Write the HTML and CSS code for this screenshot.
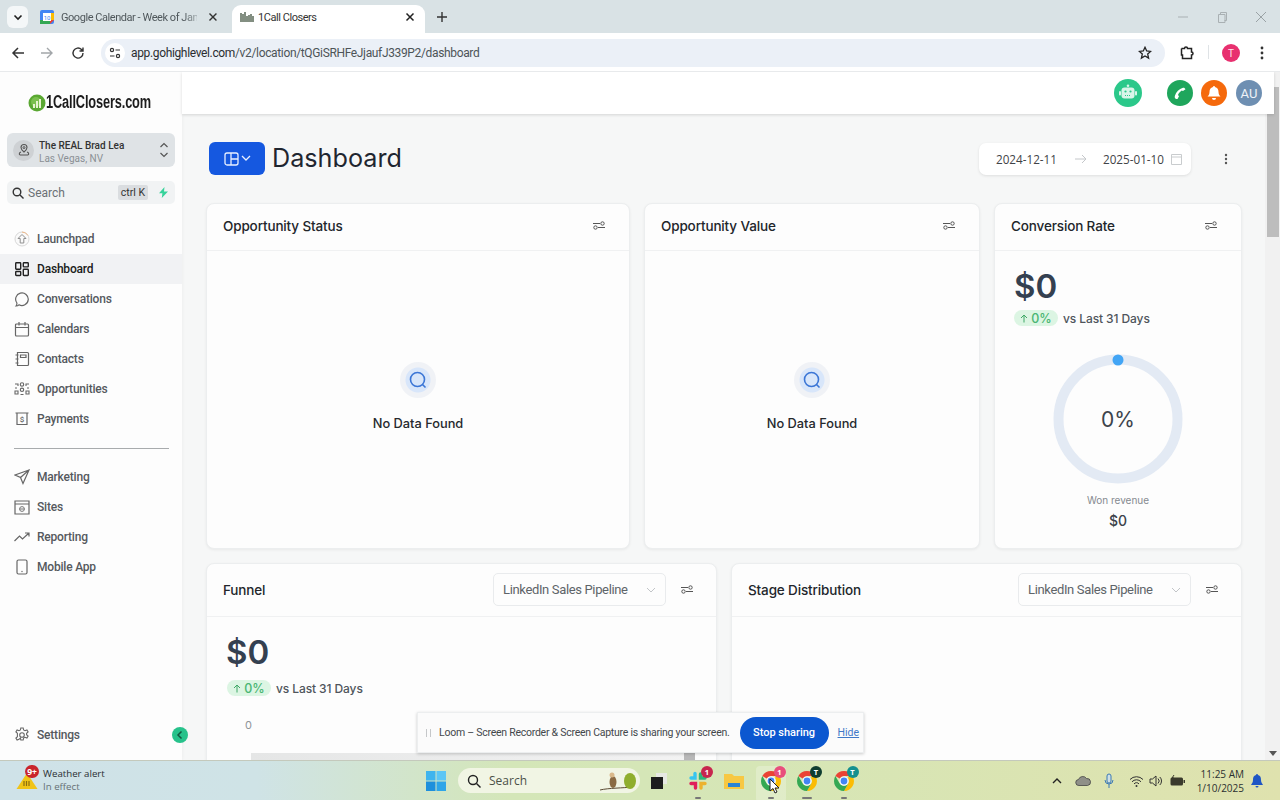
FILE: index.html
```html
<!DOCTYPE html>
<html lang="en">
<head>
<meta charset="utf-8">
<title>1Call Closers</title>
<link rel="stylesheet" href="styles.css">
</head>
<body>
<div class="tabstrip">
  <div class="tab-search"><svg width="10" height="10" viewBox="0 0 10 10"><path d="M1.500 3.500 5 7l3.500-3.500" fill="none" stroke="#1f1f1f" stroke-width="1.600"/></svg></div>
  <div class="tab tab-idle">
    <svg class="fav" width="14" height="14" viewBox="0 0 14 14"><rect width="14" height="14" rx="2" fill="#4285f4"/><rect x="0" y="10" width="10" height="4" fill="#34a853"/><path d="M10 10h4l-4 4z" fill="#ea4335"/><rect x="10" y="3" width="4" height="7" fill="#fbbc04"/><rect x="3" y="3" width="8" height="8" fill="#fff"/><text x="7" y="9.600" font-size="6" text-anchor="middle" fill="#4285f4" font-family="Roboto">10</text></svg>
    <span class="tab-title fade">Google Calendar - Week of Jan</span>
    <svg class="tab-x" width="10" height="10" viewBox="0 0 10 10"><path d="M1.500 1.500l7 7m0-7-7 7" stroke="#333" stroke-width="1.400"/></svg>
  </div>
  <div class="tab tab-active">
    <svg class="fav" width="14" height="12" viewBox="0 0 14 12"><path d="M1 2v9M3 3v8M5 1v10M7 5v6M9 4v7M11 3v8M13 5v6" stroke="#5a6a58" stroke-width="1.500"/></svg>
    <span class="tab-title">1Call Closers</span>
    <svg class="tab-x" width="10" height="10" viewBox="0 0 10 10"><path d="M1.500 1.500l7 7m0-7-7 7" stroke="#222" stroke-width="1.500"/></svg>
  </div>
  <svg class="newtab" width="12" height="12" viewBox="0 0 12 12"><path d="M6 1v10M1 6h10" stroke="#333" stroke-width="1.400"/></svg>
  <div class="winctl">
    <svg width="12" height="12" viewBox="0 0 12 12"><path d="M1 6h10" stroke="#a9b0b3"/></svg>
    <svg width="12" height="12" viewBox="0 0 12 12"><path d="M2.500 3.500h6.500v8h-6.500zM4.500 3.500V1.500h6v8h-2" fill="none" stroke="#a9b0b3"/></svg>
    <svg width="12" height="12" viewBox="0 0 12 12"><path d="M1 1l10 10m0-10L1 11" stroke="#9aa2a5"/></svg>
  </div>
</div>

<div class="toolbar">
  <svg class="tb-ic" width="14" height="14" viewBox="0 0 14 14"><path d="M13 7H2M7 2 2 7l5 5" fill="none" stroke="#333" stroke-width="1.500"/></svg>
  <svg class="tb-ic" width="14" height="14" viewBox="0 0 14 14"><path d="M1 7h11M7 2l5 5-5 5" fill="none" stroke="#a2a6a9" stroke-width="1.400"/></svg>
  <svg class="tb-ic" width="14" height="14" viewBox="0 0 14 14"><path d="M12 7a5 5 0 1 1-1.500-3.500L12 5M12 1.500V5H8.500" fill="none" stroke="#333" stroke-width="1.400"/></svg>
  <div class="omnibox">
    <span class="site-ic"><svg width="12" height="12" viewBox="0 0 12 12"><circle cx="3" cy="3" r="1.600" fill="none" stroke="#333" stroke-width="1.200"/><path d="M6.500 3H11M1 9h4.500" stroke="#333" stroke-width="1.200"/><circle cx="9" cy="9" r="1.600" fill="none" stroke="#333" stroke-width="1.200"/></svg></span>
    <span class="url">app.gohighlevel.com<span class="url-dim">/v2/location/tQGiSRHFeJjaufJ339P2/dashboard</span></span>
    <svg class="star" width="14" height="14" viewBox="0 0 14 14"><path d="M7 1.300 8.700 5l4 .4-3 2.700.9 4L7 10 3.400 12.100l.9-4-3-2.700 4-.4z" fill="none" stroke="#222" stroke-width="1.300"/></svg>
  </div>
  <svg class="ext" width="16" height="16" viewBox="0 0 16 16"><path d="M2.500 3.500h3a1.500 1.500 0 0 1 3 0h4v3.500a1.500 1.500 0 0 1 0 3v3.500h-9v-3.500h-1V3.500" fill="none" stroke="#222" stroke-width="1.500"/></svg>
  <span class="tb-sep"></span>
  <span class="profile">T</span>
  <svg class="kebab" width="4" height="14" viewBox="0 0 4 14"><circle cx="2" cy="2" r="1.400" fill="#333"/><circle cx="2" cy="7" r="1.400" fill="#333"/><circle cx="2" cy="12" r="1.400" fill="#333"/></svg>
</div>

<div class="main">
  <aside class="sidebar">
    <div class="logo">
      <svg class="logo-ic" width="18" height="18" viewBox="0 0 18 18"><circle cx="9" cy="9" r="8.500" fill="#5aa832"/><circle cx="8" cy="8" r="5" fill="#8fd060" opacity=".6"/><path d="M6 14V10M9 14V7M12 14V5" stroke="#e6f4d0" stroke-width="2"/></svg>
      <span class="logo-text">1CallClosers.com</span>
    </div>
    <div class="loc">
      <span class="loc-avatar"><svg width="14" height="14" viewBox="0 0 14 14"><path d="M7 1.500a3 3 0 0 1 3 3c0 2-3 4.500-3 4.500S4 6.500 4 4.500a3 3 0 0 1 3-3z" fill="none" stroke="#555" stroke-width="1.100"/><circle cx="7" cy="4.600" r="1" fill="none" stroke="#555"/><path d="M4 9c-2 .5-2.500 3 0 3h6c2.500 0 2-2.500 0-3" fill="none" stroke="#555" stroke-width="1.100"/></svg></span>
      <span class="loc-text"><span class="loc-name">The REAL Brad Lea</span><span class="loc-city">Las Vegas, NV</span></span>
      <svg width="10" height="16" viewBox="0 0 10 16"><path d="M1.500 5 5 1.500 8.500 5M1.500 11 5 14.500 8.500 11" fill="none" stroke="#555" stroke-width="1.200"/></svg>
    </div>
    <div class="search">
      <svg width="12" height="12" viewBox="0 0 12 12"><circle cx="5" cy="5" r="3.800" fill="none" stroke="#333" stroke-width="1.400"/><path d="m8 8 3.500 3.500" stroke="#333" stroke-width="1.400"/></svg>
      <span class="search-text">Search</span>
      <span class="kbd">ctrl K</span>
      <svg width="9" height="11" viewBox="0 0 9 11"><path d="M5.500 0 0 6.200h3.400L2.800 11 9 4.600H5z" fill="#37d39b"/></svg>
    </div>
    <nav class="nav">
      <a class="nav-item"><svg class="nav-ic" viewBox="0 0 16 16"><circle cx="8" cy="8" r="7" fill="#fafafa" stroke="#d8d8d8"/><path d="M8 1a7 7 0 0 1 6 3.500" fill="none" stroke="#eeb98a"/><path d="M8 3.500 12 7.500H9.800V12H6.200V7.500H4z" fill="none" stroke="#8f8f8f"/></svg>Launchpad</a>
      <a class="nav-item active"><svg class="nav-ic" viewBox="0 0 16 16"><g fill="none" stroke="#222" stroke-width="1.400"><rect x="1.700" y="1.700" width="5" height="6.500" rx=".7"/><rect x="9.300" y="1.700" width="5" height="4.200" rx=".7"/><rect x="1.700" y="10.500" width="5" height="4" rx=".7"/><rect x="9.300" y="8.200" width="5" height="6.300" rx=".7"/></g></svg>Dashboard</a>
      <a class="nav-item"><svg class="nav-ic" viewBox="0 0 16 16"><path d="M2 15c.8-1 1-1.800 .9-3A6.300 6.300 0 1 1 5 13.800C4.200 14.600 3 15 2 15z" fill="none" stroke="#666" stroke-width="1.200"/></svg>Conversations</a>
      <a class="nav-item"><svg class="nav-ic" viewBox="0 0 16 16"><path d="M2.500 3h11a1 1 0 0 1 1 1v10a1 1 0 0 1-1 1h-11a1 1 0 0 1-1-1V4a1 1 0 0 1 1-1zM1.500 6.500h13M5 1v3.500M11 1v3.500" fill="none" stroke="#666" stroke-width="1.200"/></svg>Calendars</a>
      <a class="nav-item"><svg class="nav-ic" viewBox="0 0 16 16"><path d="M3.500 1.500h10a1 1 0 0 1 1 1v11a1 1 0 0 1-1 1h-10zM1.500 4h3M1.500 8h3M1.500 12h3M6.500 4h5.500v2.500H6.500z" fill="none" stroke="#666" stroke-width="1.200"/></svg>Contacts</a>
      <a class="nav-item"><svg class="nav-ic" viewBox="0 0 16 16"><g fill="none" stroke="#666" stroke-width="1.100"><circle cx="8" cy="3.500" r="1.700"/><circle cx="8" cy="8.800" r="1.700"/><path d="M6.500 13.500h3M1 3h3v2M15 3h-3v2M1 10h3v3H1zM12 10h3v3h-3zM1 7h2M13 7h2"/></g></svg>Opportunities</a>
      <a class="nav-item"><svg class="nav-ic" viewBox="0 0 16 16"><path d="M1.500 2h13M3 2v11.500h10V2" fill="none" stroke="#666" stroke-width="1.200"/><text x="8" y="11" font-size="8" text-anchor="middle" fill="#666" font-family="Roboto">$</text></svg>Payments</a>
      <hr class="nav-sep">
      <a class="nav-item"><svg class="nav-ic" viewBox="0 0 16 16"><path d="M15 1 1 6l5.500 2.500L9 14.500zM6.500 8.500 15 1" fill="none" stroke="#666" stroke-width="1.200"/></svg>Marketing</a>
      <a class="nav-item"><svg class="nav-ic" viewBox="0 0 16 16"><path d="M1 2h14v13H1zM1 5h14" fill="none" stroke="#666" stroke-width="1.200"/><circle cx="8" cy="10" r="2.400" fill="none" stroke="#777"/><path d="M5.600 10h4.800" stroke="#777"/></svg>Sites</a>
      <a class="nav-item"><svg class="nav-ic" viewBox="0 0 16 16"><path d="M.5 12 5.500 7l3 3L15 4M11 4h4v3.500" fill="none" stroke="#666" stroke-width="1.200"/></svg>Reporting</a>
      <a class="nav-item"><svg class="nav-ic" viewBox="0 0 16 16"><rect x="3" y="1" width="10" height="14" rx="1.500" fill="none" stroke="#666" stroke-width="1.200"/><circle cx="8" cy="12.500" r=".7" fill="#666"/></svg>Mobile App</a>
    </nav>
    <a class="nav-item settings"><svg class="nav-ic" viewBox="0 0 16 16"><circle cx="8" cy="8" r="2.300" fill="none" stroke="#666" stroke-width="1.100"/><path d="M6.800 1h2.400l.4 2 1.400.7 1.900-.8 1.200 2.100-1.500 1.300v1.400l1.500 1.300-1.200 2.100-1.900-.8-1.400.7-.4 2H6.800l-.4-2L5 12.300l-1.900.8L1.900 11l1.500-1.300V6.300L1.900 5l1.200-2.100 1.900.8 1.400-.7z" fill="none" stroke="#666" stroke-width="1.100"/></svg>Settings</a>
    <span class="collapse"><svg width="8" height="10" viewBox="0 0 8 10"><path d="M5.500 1.500 2 5l3.500 3.500" fill="none" stroke="#14573f" stroke-width="1.500"/></svg></span>
  </aside>

  <div class="page">
    <header class="topbar">
      <span class="round bot"><svg width="20" height="18" viewBox="0 0 20 18"><circle cx="10" cy="1.800" r="1.300" fill="#d9f5e9"/><rect x="3.500" y="3.500" width="13" height="11" rx="3" fill="#d9f5e9"/><rect x="1" y="7" width="2" height="4.500" rx="1" fill="#d9f5e9"/><rect x="17" y="7" width="2" height="4.500" rx="1" fill="#d9f5e9"/><circle cx="7.500" cy="7.500" r="1.100" fill="#2bc88a"/><circle cx="12.500" cy="7.500" r="1.100" fill="#2bc88a"/><path d="M7 11.500h6" stroke="#2bc88a" stroke-dasharray="1 1"/></svg></span>
      <span class="round phone"><svg width="14" height="14" viewBox="0 0 14 14"><path d="M3 13c-1.500-1-1.500-2-1-3.500C3 6 6 3 10 1.800c1-.3 2 .3 2.500 1.500l-2.500 1.700-1.300-.5C7 5.700 5.800 7 5 9l1 1.200L4.500 13z" fill="#fff"/></svg></span>
      <span class="round bell"><svg width="14" height="16" viewBox="0 0 14 16"><path d="M7 1a1 1 0 0 1 1 1c2.500.5 3.500 2.500 3.500 5 0 2 1 3.500 2 4.500H.5c1-1 2-2.500 2-4.500 0-2.500 1-4.500 3.500-5a1 1 0 0 1 1-1z" fill="#fff"/><path d="M5 13h4a2 2 0 0 1-4 0z" fill="#fff"/></svg></span>
      <span class="round au">AU</span>
    </header>
    <div class="content">
      <div class="title-row">
        <button class="switch"><svg width="15" height="14" viewBox="0 0 15 14"><path d="M3 1h9a2 2 0 0 1 2 2v8a2 2 0 0 1-2 2H3a2 2 0 0 1-2-2V3a2 2 0 0 1 2-2zM7 1v12M7 7h7" fill="none" stroke="#e8f0ff" stroke-width="1.300"/></svg><svg width="10" height="7" viewBox="0 0 10 7"><path d="M1 1l4 4 4-4" fill="none" stroke="#e8f0ff" stroke-width="1.300"/></svg></button>
        <h1 class="page-title">Dashboard</h1>
        <div class="dates">
          <span class="date">2024-12-11</span>
          <svg class="date-arrow" width="12" height="10" viewBox="0 0 12 10"><path d="M0 5h11M7 1l4 4-4 4" fill="none" stroke="#c4c7ca"/></svg>
          <span class="date">2025-01-10</span>
          <svg class="date-cal" width="11" height="12" viewBox="0 0 11 12"><path d="M.5 1.500h10v10H.5zM.5 4h10" fill="none" stroke="#c9ccce"/></svg>
        </div>
        <svg class="more" width="4" height="12" viewBox="0 0 4 12"><circle cx="2" cy="2" r="1.200" fill="#555"/><circle cx="2" cy="6" r="1.200" fill="#555"/><circle cx="2" cy="10" r="1.200" fill="#555"/></svg>
      </div>

      <div class="row row-top">
        <section class="card">
          <div class="card-head"><h2 class="card-title">Opportunity Status</h2><svg class="tune" viewBox="0 0 12 9"><g fill="none" stroke="#555"><path d="M0 2.500h7M5 6.500h7"/><circle cx="9.500" cy="2.500" r="1.700"/><circle cx="2.500" cy="6.500" r="1.700"/></g></svg></div>
          <div class="empty">
            <span class="empty-ic"><svg width="18" height="18" viewBox="0 0 18 18"><circle cx="8.500" cy="8.500" r="7" fill="none" stroke="#3b76d6" stroke-width="1.600"/><path d="m13.500 13.500 3 3" stroke="#3b76d6" stroke-width="1.600"/></svg></span>
            <span class="empty-text">No Data Found</span>
          </div>
        </section>
        <section class="card">
          <div class="card-head"><h2 class="card-title">Opportunity Value</h2><svg class="tune" viewBox="0 0 12 9"><g fill="none" stroke="#555"><path d="M0 2.500h7M5 6.500h7"/><circle cx="9.500" cy="2.500" r="1.700"/><circle cx="2.500" cy="6.500" r="1.700"/></g></svg></div>
          <div class="empty">
            <span class="empty-ic"><svg width="18" height="18" viewBox="0 0 18 18"><circle cx="8.500" cy="8.500" r="7" fill="none" stroke="#3b76d6" stroke-width="1.600"/><path d="m13.500 13.500 3 3" stroke="#3b76d6" stroke-width="1.600"/></svg></span>
            <span class="empty-text">No Data Found</span>
          </div>
        </section>
        <section class="card">
          <div class="card-head"><h2 class="card-title">Conversion Rate</h2><svg class="tune" viewBox="0 0 12 9"><g fill="none" stroke="#555"><path d="M0 2.500h7M5 6.500h7"/><circle cx="9.500" cy="2.500" r="1.700"/><circle cx="2.500" cy="6.500" r="1.700"/></g></svg></div>
          <div class="stat">
            <div class="amount">$0</div>
            <div class="trend"><span class="badge"><svg width="8" height="9" viewBox="0 0 8 9"><path d="M4 8.500V1M1 4l3-3 3 3" fill="none" stroke="#3fa866"/></svg>0%</span><span class="vs">vs Last 31 Days</span></div>
          </div>
          <div class="ring">
            <svg width="130" height="130" viewBox="0 0 130 130"><circle cx="65" cy="65" r="59.500" fill="none" stroke="#e3eaf4" stroke-width="10"/><circle cx="65" cy="6" r="5.500" fill="#42a5f5"/></svg>
            <span class="ring-label">0%</span>
          </div>
          <div class="won">Won revenue</div>
          <div class="won-val">$0</div>
        </section>
      </div>

      <div class="row row-bottom">
        <section class="card">
          <div class="card-head tall"><h2 class="card-title">Funnel</h2><div class="select">LinkedIn Sales Pipeline<svg width="10" height="6" viewBox="0 0 10 6"><path d="M1 1l4 4 4-4" fill="none" stroke="#c2c5c8"/></svg></div><svg class="tune" viewBox="0 0 12 9"><g fill="none" stroke="#555"><path d="M0 2.500h7M5 6.500h7"/><circle cx="9.500" cy="2.500" r="1.700"/><circle cx="2.500" cy="6.500" r="1.700"/></g></svg></div>
          <div class="stat">
            <div class="amount">$0</div>
            <div class="trend trend-low"><span class="badge"><svg width="8" height="9" viewBox="0 0 8 9"><path d="M4 8.500V1M1 4l3-3 3 3" fill="none" stroke="#3fa866"/></svg>0%</span><span class="vs">vs Last 31 Days</span></div>
          </div>
          <div class="axis">0</div>
          <div class="chart-strip"><span class="chart-end"></span></div>
        </section>
        <section class="card">
          <div class="card-head tall"><h2 class="card-title">Stage Distribution</h2><div class="select">LinkedIn Sales Pipeline<svg width="10" height="6" viewBox="0 0 10 6"><path d="M1 1l4 4 4-4" fill="none" stroke="#c2c5c8"/></svg></div><svg class="tune" viewBox="0 0 12 9"><g fill="none" stroke="#555"><path d="M0 2.500h7M5 6.500h7"/><circle cx="9.500" cy="2.500" r="1.700"/><circle cx="2.500" cy="6.500" r="1.700"/></g></svg></div>
        </section>
      </div>
    </div>
  </div>

  <div class="scrollbar">
    <span class="thumb"></span>
    <svg class="sb-down" width="8" height="5" viewBox="0 0 8 5"><path d="M0 0h8L4 5z" fill="#555"/></svg>
  </div>

  <div class="loom">
    <span class="grip"></span>
    <span class="loom-text">Loom – Screen Recorder &amp; Screen Capture is sharing your screen.</span>
    <button class="stop">Stop sharing</button>
    <a class="hide">Hide</a>
  </div>
</div>

<footer class="taskbar">
  <div class="weather">
    <span class="w-ic"><svg width="22" height="20" viewBox="0 0 22 20"><path d="M11 2 21.500 18H.5z" fill="#f0c419"/><path d="M8 15V10M10.500 15V10M13 15V10" stroke="#8a6d10" stroke-width="1.200"/></svg><span class="w-badge">9+</span></span>
    <span class="w-text"><span class="w-title">Weather alert</span><span class="w-sub">In effect</span></span>
  </div>
  <div class="tb-center">
    <svg class="win" width="20" height="20" viewBox="0 0 20 20"><rect width="9.500" height="9.500" fill="#3fb4ee"/><rect x="10.500" width="9.500" height="9.500" fill="#5cc6f5"/><rect y="10.500" width="9.500" height="9.500" fill="#1e8fdc"/><rect x="10.500" y="10.500" width="9.500" height="9.500" fill="#2ea5e8"/></svg>
    <div class="tb-search">
      <svg width="14" height="14" viewBox="0 0 14 14"><circle cx="6" cy="6" r="4.500" fill="none" stroke="#222" stroke-width="1.400"/><path d="m9.500 9.500 4 4" stroke="#222" stroke-width="1.400"/></svg>
      <span class="tb-search-text">Search</span>
      <svg class="birds" width="40" height="24" viewBox="0 0 40 24"><path d="M0 21c8-2 24-2 32-3" stroke="#5b4a33" stroke-width="1" fill="none"/><ellipse cx="13" cy="13" rx="3.500" ry="6" fill="#8a6a42"/><circle cx="12" cy="6" r="2.500" fill="#d9b98a"/><ellipse cx="30" cy="12" rx="6" ry="8" fill="#8fae2e"/></svg>
    </div>
    <svg class="tview" width="20" height="20" viewBox="0 0 20 20"><rect x="7" y="2" width="11" height="11" fill="#e6e8e2"/><rect x="2" y="6" width="12" height="12" fill="#1d1d1d"/></svg>
    <span class="app slack"><svg width="20" height="20" viewBox="0 0 20 20"><g stroke-width="3.400" stroke-linecap="round" fill="none"><path d="M7 2.500v4.500H3" stroke="#36c5f0"/><path d="M17 7h-4.500V3" stroke="#2eb67d"/><path d="M13 17v-4.500h4" stroke="#ecb22e"/><path d="M3 12.500h4.500V17" stroke="#e01e5a"/></g></svg><span class="dot-badge b-red">1</span><span class="under"></span></span>
    <span class="app folder"><svg width="22" height="20" viewBox="0 0 22 20"><path d="M1 3h8l2 2h10v13H1z" fill="#f7c843"/><rect x="5" y="12" width="12" height="4" fill="#2b84d6"/></svg></span>
    <span class="app chrome hot"><svg width="20" height="20" viewBox="0 0 20 20"><use href="#chrome"/></svg><span class="dot-badge b-pink">1</span><span class="under"></span></span>
    <span class="app chrome"><svg width="20" height="20" viewBox="0 0 20 20"><use href="#chrome"/></svg><span class="dot-badge b-dark">T</span><span class="under wide"></span></span>
    <span class="app chrome"><svg width="20" height="20" viewBox="0 0 20 20"><use href="#chrome"/></svg><span class="dot-badge b-teal">T</span><span class="under"></span></span>
    <svg class="cursor" width="12" height="16" viewBox="0 0 12 16"><path d="M1 1v12l3-2.500L6 15l2-1-2-4h4z" fill="#fff" stroke="#222"/></svg>
  </div>
  <div class="tray">
    <svg width="10" height="7" viewBox="0 0 10 7"><path d="M1 6l4-4 4 4" fill="none" stroke="#222" stroke-width="1.400"/></svg>
    <svg class="t-cloud" width="16" height="11" viewBox="0 0 16 11"><path d="M4 10.500a3 3 0 0 1-.5-6A4.500 4.500 0 0 1 11.500 3.500 3.500 3.500 0 0 1 12.500 10.500z" fill="#8f9088" stroke="#444" stroke-width=".8"/></svg>
    <svg class="t-mic" width="10" height="16" viewBox="0 0 10 16"><rect x="3" y="1" width="4" height="9" rx="2" fill="#cfe0e4" stroke="#3b79b5"/><path d="M1 7a4 4 0 0 0 8 0M5 11v4" fill="none" stroke="#3b79b5"/></svg>
    <svg class="t-wifi" width="15" height="12" viewBox="0 0 15 12"><path d="M1 4.500a9 9 0 0 1 13 0M3 6.800a6 6 0 0 1 9 0M5 9a3 3 0 0 1 5 0" fill="none" stroke="#333"/><circle cx="7.500" cy="11" r="1" fill="#333"/></svg>
    <svg class="t-sound" width="13" height="12" viewBox="0 0 13 12"><path d="M1 4h2.500L7 1v10L3.500 8H1zM9 3.500a3.500 3.500 0 0 1 0 5M10.800 2a5.500 5.500 0 0 1 0 8" fill="none" stroke="#333"/></svg>
    <svg class="t-batt" width="15" height="11" viewBox="0 0 15 11"><rect x=".5" y="2.500" width="12.500" height="8" rx="1.500" fill="#3a3a2c"/><rect x="13.500" y="5" width="1.500" height="3" fill="#3a3a2c"/><path d="M4 0 2 3h2L3 6" stroke="#3a3a2c" fill="none"/></svg>
    <div class="clock"><span>11:25 AM</span><span>1/10/2025</span></div>
    <svg class="t-bell" width="12" height="14" viewBox="0 0 12 14"><path d="M6 0a1 1 0 0 1 1 1c2.500.6 3 2.500 3 5 0 2 1 3.500 2 5H0c1-1.500 2-3 2-5 0-2.500.5-4.400 3-5a1 1 0 0 1 1-1zM4.500 12h3a1.500 1.500 0 0 1-3 0z" fill="#1f56c4"/></svg>
  </div>
</footer>

<svg class="defs" width="0" height="0"><defs><symbol id="chrome" viewBox="0 0 20 20"><path d="M10 0a10 10 0 0 1 8.660 5H10a5 5 0 0 0-4.330 2.500L1.340 5A10 10 0 0 1 10 0z" fill="#ea4335"/><path d="M18.660 5A10 10 0 0 1 10 20l4.330-7.500A5 5 0 0 0 14.330 7.500L14.300 5z" fill="#fbbc04"/><path d="M10 20A10 10 0 0 1 1.340 5l4.330 7.500A5 5 0 0 0 14.330 12.500z" fill="#34a853"/><circle cx="10" cy="10" r="4.500" fill="#fff"/><circle cx="10" cy="10" r="3.400" fill="#4285f4"/></symbol></defs></svg>
</body>
</html>
```
FILE: styles.css
```css
* { box-sizing: border-box; }
html, body { margin: 0; padding: 0; }
body {
  width: 1280px;
  height: 800px;
  overflow: hidden;
  display: flex;
  flex-direction: column;
  font-family: Inter, "Liberation Sans", sans-serif;
  color: #222;
  background: #fff;
}
.defs { display: block; height: 0; }

/* Browser tab strip */
.tabstrip {
  height: 33px;
  flex: none;
  background: #d9e2e5;
  display: flex;
  align-items: flex-end;
  padding-left: 7px;
  font-family: Roboto, "Noto Sans", sans-serif;
  font-size: 11px;
}
.tab-search {
  width: 21px;
  height: 22px;
  margin-bottom: 5px;
  border-radius: 6px;
  background: #f4f7f8;
  display: flex;
  align-items: center;
  justify-content: center;
}
.tab { height: 28px; display: flex; align-items: center; padding-bottom: 4px; }
.fav { flex: none; }
.tab-idle { width: 192px; padding-left: 12px; padding-right: 2px; margin-right: 12px; color: #50585c; }
.tab-idle .tab-title { width: 137px; margin-left: 7px; }
.tab-idle .tab-x { margin-left: 11px; }
.tab-title { white-space: nowrap; overflow: hidden; letter-spacing: -.45px; }
.fade {
  -webkit-mask-image: linear-gradient(90deg, #000 90%, rgba(0, 0, 0, .35));
  mask-image: linear-gradient(90deg, #000 90%, rgba(0, 0, 0, .35));
}
.tab-active {
  width: 193px;
  padding-left: 8px;
  background: #fff;
  border-radius: 9px 9px 0 0;
  color: #333;
}
.tab-active .tab-title { margin-left: 4px; width: 147px; }
.newtab { margin: 0 0 10px 11px; }
.winctl {
  margin-left: auto;
  margin-bottom: 10px;
  display: flex;
  gap: 27px;
  padding-right: 13px;
}

/* Browser toolbar */
.toolbar {
  height: 39px;
  flex: none;
  background: #fff;
  display: flex;
  align-items: center;
  padding: 0 16px 0 11px;
  border-bottom: 1px solid #e8eaec;
}
.tb-ic { margin-right: 15px; margin-top: 1px; }
.tb-ic:nth-child(2) { margin-right: 17px; }
.tb-ic:nth-child(3) { margin-right: 16px; }
.omnibox {
  width: 1064px;
  height: 28px;
  margin-top: 1px;
  border-radius: 14px;
  background: #ebf0f7;
  display: flex;
  align-items: center;
  padding: 0 13px 0 4px;
  font-family: Roboto, "Noto Sans", sans-serif;
  font-size: 12px;
  letter-spacing: -.35px;
  color: #2a2d30;
}
.site-ic {
  width: 20px;
  height: 20px;
  border-radius: 50%;
  background: #fff;
  display: flex;
  align-items: center;
  justify-content: center;
}
.url { margin-left: 6px; }
.url-dim { color: #4d5458; }
.star { margin-left: auto; }
.ext { margin-left: 14px; margin-top: 1px; }
.tb-sep { width: 1px; height: 14px; background: #dfe3e6; margin-left: 13px; }
.profile {
  width: 18px;
  height: 18px;
  margin-left: 13px;
  margin-top: 1px;
  border-radius: 50%;
  background: #e8306f;
  color: #ffe6ee;
  font-size: 10px;
  display: flex;
  align-items: center;
  justify-content: center;
}
.kebab { margin-left: 20px; margin-top: 1px; }

/* App layout */
.main {
  position: relative;
  height: 688px;
  flex: none;
  display: flex;
  overflow: hidden;
}
.sidebar {
  position: relative;
  width: 182px;
  flex: none;
  background: #fdfdfd;
  display: flex;
  flex-direction: column;
  font-family: Roboto, Inter, sans-serif;
  box-shadow: 1px 0 3px rgba(0, 0, 0, .03);
  z-index: 1;
}
.logo {
  height: 61px;
  display: flex;
  align-items: center;
  padding: 0 0 0 28px;
}
.logo-ic { flex: none; }
.logo-text {
  font-family: "Liberation Sans", sans-serif;
  font-weight: 700;
  font-size: 18px;
  letter-spacing: -.2px;
  color: #1c1c1c;
  white-space: nowrap;
  width: 106px;
  transform: scaleX(.71);
  transform-origin: left center;
}
.loc {
  height: 34px;
  margin: 0 7px;
  padding: 0 6px;
  background: #dfe3e6;
  border-radius: 6px;
  display: flex;
  align-items: center;
}
.loc-avatar {
  width: 21px;
  height: 21px;
  border-radius: 50%;
  background: #ced1d4;
  display: flex;
  align-items: center;
  justify-content: center;
  flex: none;
}
.loc-text { flex: 1; display: flex; flex-direction: column; margin-left: 5px; padding-top: 3px; line-height: 13px; }
.loc-name { font-size: 10px; font-weight: 500; color: #333; }
.loc-city { font-size: 10px; color: #8b9095; }
.search {
  height: 23px;
  margin: 14px 7px 0;
  padding: 0 7px 0 5px;
  background: #f1f3f4;
  border-radius: 5px;
  display: flex;
  align-items: center;
}
.search-text { flex: 1; font-size: 12px; color: #6b7075; margin-left: 4px; }
.kbd {
  background: #dadde0;
  padding: 1px 3px;
  border-radius: 2px;
  font-size: 10.500px;
  color: #333;
  margin-right: 11px;
}
.nav { margin-top: 20px; display: flex; flex-direction: column; }
.nav-item {
  height: 30px;
  padding-left: 14px;
  display: flex;
  align-items: center;
  gap: 7px;
  font-size: 12px;
  letter-spacing: -.2px;
  font-weight: 500;
  color: #55595e;
}
.nav-ic { width: 16px; height: 16px; flex: none; }
.nav-item.active { background: #f1f2f4; color: #1b1d20; }
.nav-sep { width: 155px; margin: 14px 0 13px 14px; border: 0; border-top: 1px solid #a8abad; }
.settings { margin-top: auto; margin-bottom: 10px; }
.collapse {
  position: absolute;
  right: -6px;
  bottom: 17px;
  width: 16px;
  height: 16px;
  border-radius: 50%;
  background: #27c28b;
  display: flex;
  align-items: center;
  justify-content: center;
}

/* Page */
.page { flex: 1; min-width: 0; display: flex; flex-direction: column; background: #f6f7f7; }
.topbar {
  height: 42px;
  flex: none;
  margin-right: -9px;
  background: #fff;
  box-shadow: 0 1px 3px rgba(0, 0, 0, .14);
  display: flex;
  align-items: center;
  justify-content: flex-end;
  padding-right: 12px;
  position: relative;
  z-index: 3;
}
.round {
  width: 26px;
  height: 26px;
  border-radius: 50%;
  display: flex;
  align-items: center;
  justify-content: center;
  margin-left: 8px;
}
.bot { width: 28px; height: 28px; background: #2bc88a; margin-right: 17px; }
.phone { background: #1fa65c; }
.bell { background: #f5690c; }
.au { margin-left: 9px; background: #6e8fb2; color: #eef3f8; font-size: 13px; font-family: Roboto, sans-serif; }
.content { padding: 28px 23px 0 24px; }
.title-row { height: 33px; display: flex; align-items: center; padding-left: 3px; }
.switch {
  width: 56px;
  height: 33px;
  border: 0;
  border-radius: 6px;
  background: #1558e0;
  display: flex;
  align-items: center;
  justify-content: center;
  gap: 2px;
  padding: 0;
}
.page-title { margin: 0 0 2px 7px; font-size: 25.200px; font-weight: 400; color: #1f2630; flex: 1; }
.dates {
  width: 212px;
  height: 32px;
  background: #fff;
  border-radius: 7px;
  box-shadow: 0 1px 3px rgba(0, 0, 0, .1);
  display: flex;
  align-items: center;
  padding-left: 17px;
  font-family: "Open Sans", sans-serif;
  font-size: 11.700px;
  color: #3f4448;
}
.date-arrow { margin: 0 16px 0 18px; }
.date-cal { margin-left: 7px; }
.more { margin: 0 14px 0 33px; }
.row { display: grid; gap: 14px; margin-top: 28px; }
.row-top { grid-template-columns: 424px 336px 248px; height: 346px; }
.row-bottom { grid-template-columns: 511px 511px; margin-top: 14px; height: 400px; }
.card {
  background: #fdfdfd;
  border: 1px solid #eceeef;
  border-radius: 8px;
  box-shadow: 0 1px 3px rgba(0, 0, 0, .06);
  display: flex;
  flex-direction: column;
  min-width: 0;
}
.card-head {
  height: 47px;
  flex: none;
  display: flex;
  align-items: center;
  padding: 0 24px 3px 16px;
  border-bottom: 1px solid #f0f1f2;
}
.card-head.tall { height: 53px; padding: 0 23px 1px 16px; }
.card-title { margin: 0; font-size: 13.500px; letter-spacing: -.14px; font-weight: 500; color: #22262b; flex: 1; }
.tune { width: 12px; height: 9px; flex: none; }
.empty {
  flex: 1;
  display: flex;
  flex-direction: column;
  align-items: center;
  padding-top: 111px;
}
.empty-ic {
  width: 36px;
  height: 36px;
  border-radius: 50%;
  background: radial-gradient(circle, #d8e6fa 0 12px, #f0f2f6 13px);
  display: flex;
  align-items: center;
  justify-content: center;
}
.empty-text { margin-top: 18px; font-size: 12.800px; font-weight: 500; color: #26292d; }
.stat { padding: 15px 0 0 19px; }
.amount { font-size: 33px; font-weight: 600; line-height: 40px; color: #344050; }
.trend { display: flex; align-items: center; margin-top: 4px; }
.trend-low { margin-top: 8px; margin-left: 1px; }
.badge {
  width: 44px;
  height: 16px;
  border-radius: 8px;
  background: #dcf5e3;
  color: #4bb573;
  font-size: 12.500px;
  font-weight: 500;
  display: flex;
  align-items: center;
  justify-content: center;
  gap: 3px;
}
.vs { margin-left: 5px; font-size: 12px; letter-spacing: -.1px; font-weight: 500; color: #4f555c; }
.ring { position: relative; width: 130px; height: 130px; margin: 28px auto 0; }
.ring svg { display: block; }
.ring-label {
  position: absolute;
  inset: 0;
  display: flex;
  align-items: center;
  justify-content: center;
  font-size: 21px;
  color: #3c434b;
}
.won { text-align: center; font-size: 10px; color: #858a90; margin-top: 9px; line-height: 14px; }
.won-val { text-align: center; font-size: 14px; font-weight: 500; color: #3c434b; margin-top: 5px; }
.select {
  width: 173px;
  height: 33px;
  border: 1px solid #e9ebed;
  border-radius: 5px;
  background: #fdfdfd;
  margin-right: 15px;
  padding: 0 9px;
  font-family: Roboto, sans-serif;
  font-size: 13px;
  letter-spacing: -.35px;
  color: #5e6469;
  display: flex;
  align-items: center;
  justify-content: space-between;
  white-space: nowrap;
}
.axis { margin: 22px 0 0 38px; font-size: 11px; color: #8f9499; line-height: 14px; }
.chart-strip {
  margin: 21px 21px 0 44px;
  height: 8px;
  background: linear-gradient(90deg, #e5e6e6, #f3f3f3);
  position: relative;
}
.chart-end { position: absolute; right: 0; top: 0; width: 11px; height: 8px; background: #b8b8b8; }

/* Scrollbar */
.scrollbar {
  width: 15px;
  flex: none;
  background: #f1f1f1;
  padding: 15px 1px 3px 2px;
  display: flex;
  flex-direction: column;
  align-items: center;
  z-index: 2;
}
.thumb { width: 12px; height: 150px; background: #bdbdbd; }
.sb-down { margin-top: auto; margin-bottom: 1px; }

/* Screen share bar */
.loom {
  position: absolute;
  left: 417px;
  top: 640px;
  width: 447px;
  height: 41px;
  background: #fbfbfb;
  border: 1px solid #eceeef;
  box-shadow: 0 1px 3px rgba(0, 0, 0, .2);
  display: flex;
  align-items: center;
  padding-left: 8px;
  font-family: Roboto, "Noto Sans", sans-serif;
  font-size: 10.500px;
  color: #44484c;
  z-index: 4;
}
.grip { width: 5px; height: 8px; border-left: 1.500px solid #c5c7c9; border-right: 1.500px solid #c5c7c9; }
.loom-text { margin-left: 8px; white-space: nowrap; letter-spacing: -.25px; }
.stop {
  width: 89px;
  height: 32px;
  margin-left: 10px;
  border: 0;
  border-radius: 16px;
  background: #0b57d0;
  color: #fff;
  font-family: Roboto, sans-serif;
  font-size: 11px;
  font-weight: 500;
  padding: 0;
  white-space: nowrap;
  flex: none;
}
.hide { margin-left: 9px; color: #3f78c8; text-decoration: underline; }

/* Taskbar */
.taskbar {
  height: 40px;
  flex: none;
  border-top: 1px solid #c4c9bc;
  background: linear-gradient(90deg, #cfe2e8 0, #cfe3e6 20%, #d4e6b8 40%, #d6e6b6 60%, #dfe2ae 100%);
  display: flex;
  align-items: center;
  font-family: "Open Sans", "Noto Sans", sans-serif;
  position: relative;
}
.weather { width: 426px; flex: none; display: flex; align-items: center; padding-left: 16px; }
.w-ic { position: relative; width: 22px; height: 20px; margin-right: 5px; }
.w-badge {
  position: absolute;
  left: 9px;
  top: -6px;
  width: 14px;
  height: 13px;
  border-radius: 7px;
  background: #c9252b;
  color: #fff;
  font-size: 8.500px;
  font-weight: 700;
  display: flex;
  align-items: center;
  justify-content: center;
}
.w-text { display: flex; flex-direction: column; font-size: 9.700px; line-height: 13px; padding-bottom: 1px; }
.w-title { color: #2a2f33; }
.w-sub { color: #667075; }
.tb-center { display: flex; align-items: center; position: relative; }
.win { flex: none; }
.tb-search {
  width: 182px;
  height: 25px;
  margin-left: 12px;
  border-radius: 13px;
  background: #f1f5e4;
  display: flex;
  align-items: center;
  padding-left: 9px;
  font-size: 12px;
  color: #4c5148;
}
.tb-search-text { flex: 1; margin-left: 8px; }
.birds { flex: none; }
.tview { margin-left: 9px; }
.app { position: relative; width: 22px; height: 20px; display: flex; justify-content: center; flex: none; }
.slack { margin-left: 18px; }
.folder { margin-left: 14px; }
.chrome { margin-left: 14.500px; }
.hot::before { content: ""; position: absolute; inset: -5px -4px -11px; background: rgba(255, 255, 255, .25); border-radius: 4px; }
.app svg { position: relative; }
.dot-badge {
  position: absolute;
  right: -4px;
  top: -5px;
  width: 12px;
  height: 12px;
  border-radius: 50%;
  color: #fff;
  font-size: 7.500px;
  font-weight: 700;
  display: flex;
  align-items: center;
  justify-content: center;
}
.b-red { background: #c7264e; }
.b-pink { background: #e84f7c; }
.b-dark { background: #0f3d30; }
.b-teal { background: #14908f; }
.under { position: absolute; bottom: -8px; left: 8px; width: 6px; height: 2px; background: #777; border-radius: 1px; }
.under.wide { width: 10px; left: 6px; }
.cursor { position: absolute; left: 343px; top: 10px; }
.tray {
  margin-left: auto;
  display: flex;
  align-items: center;
  padding-right: 17px;
}
.t-cloud { margin-left: 13px; }
.t-mic { margin-left: 13px; }
.t-wifi { margin-left: 15px; }
.t-sound { margin-left: 5px; }
.t-batt { margin-left: 8px; }
.t-bell { margin-left: 7px; }
.clock {
  display: flex;
  flex-direction: column;
  align-items: flex-end;
  width: 46px;
  margin-left: 13px;
  font-size: 10px;
  line-height: 14px;
  color: #2b3030;
}
```
